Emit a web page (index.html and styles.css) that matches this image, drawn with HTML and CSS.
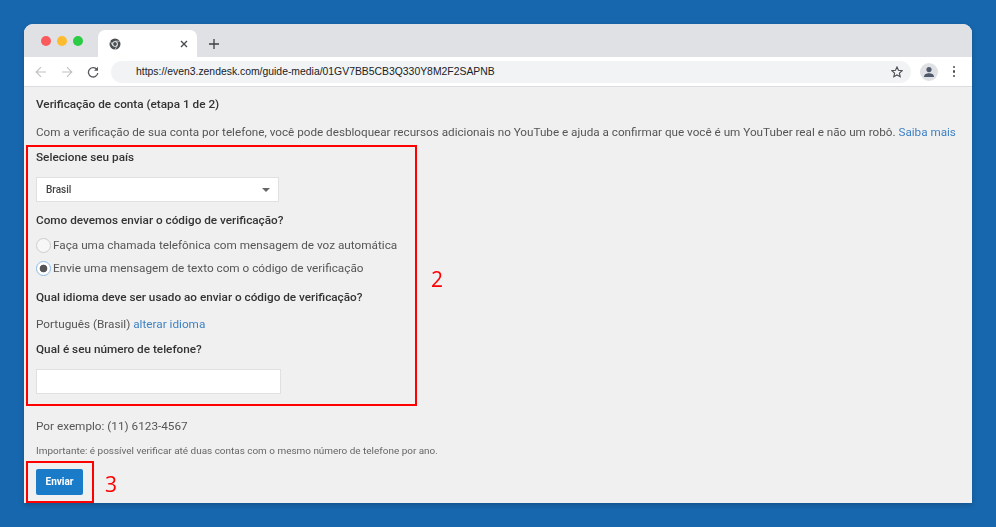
FILE: index.html
```html
<!DOCTYPE html>
<html lang="pt-BR">
<head>
<meta charset="utf-8">
<title>Verificação de conta</title>
<link rel="stylesheet" href="styles.css">
</head>
<body>
<div class="window">
  <div class="tabstrip">
    <div class="lights"><i class="light red"></i><i class="light yellow"></i><i class="light green"></i></div>
    <div class="tab">
      <svg class="favicon" viewBox="0 0 12 12" width="12" height="12"><circle cx="6" cy="6" r="5.5" fill="#4a4d52"/><circle cx="6" cy="6" r="2.8" fill="#fff"/><circle cx="6" cy="6" r="1.9" fill="#4a4d52"/><path d="M6 3.2h5M3.6 7.4 1.2 3.2M8.4 7.4 6 11.5" stroke="#fff" stroke-width=".6"/></svg>
      <svg class="close" viewBox="0 0 8 8" width="8" height="8"><path d="M1 1l6 6M7 1L1 7" stroke="#45484d" stroke-width="1.3"/></svg>
    </div>
    <svg class="newtab" viewBox="0 0 10 10" width="10" height="10"><path d="M5 0v10M0 5h10" stroke="#3c4043" stroke-width="1.3"/></svg>
  </div>
  <div class="toolbar">
    <svg class="nav" viewBox="0 0 12 12" width="12" height="12"><path d="M11 6H1.5M6 1.2 1.2 6 6 10.8" fill="none" stroke="#bfc1c5" stroke-width="1.1"/></svg>
    <svg class="nav" viewBox="0 0 12 12" width="12" height="12"><path d="M1 6h9.5M6 1.2 10.8 6 6 10.8" fill="none" stroke="#bfc1c5" stroke-width="1.1"/></svg>
    <svg class="nav" viewBox="0 0 12 12" width="12" height="12"><path d="M10 3.6A4.7 4.7 0 1 0 10.8 7" fill="none" stroke="#56595e" stroke-width="1.3"/><path d="M11 .8v4H7z" fill="#56595e"/></svg>
    <div class="omnibox">
      <span class="url">https://even3.zendesk.com/guide-media/01GV7BB5CB3Q330Y8M2F2SAPNB</span>
      <svg class="star" viewBox="0 0 12 12" width="12" height="12"><path d="M6 1l1.5 3.3 3.6.4-2.7 2.4.8 3.6L6 8.9l-3.2 1.8.8-3.6L.9 4.7l3.6-.4z" fill="none" stroke="#4a4d52" stroke-width="1.1"/></svg>
    </div>
    <div class="avatar"><svg viewBox="0 0 12 12" width="12" height="12"><circle cx="6" cy="3.6" r="2.6" fill="#4f5a6b"/><path d="M1 11c0-2.8 2.5-3.8 5-3.8s5 1 5 3.8z" fill="#4f5a6b"/></svg></div>
    <div class="menu"><i></i><i></i><i></i></div>
  </div>
  <main class="page">
    <h1 class="label heading">Verificação de conta (etapa 1 de 2)</h1>
    <p class="intro">Com a verificação de sua conta por telefone, você pode desbloquear recursos adicionais no YouTube e ajuda a confirmar que você é um YouTuber real e não um robô. <a class="link">Saiba mais</a></p>
    <h2 class="label country">Selecione seu país</h2>
    <div class="select"><span>Brasil</span><i class="caret"></i></div>
    <h2 class="label how">Como devemos enviar o código de verificação?</h2>
    <div class="radios">
      <div class="radio"><i class="dot"></i><span>Faça uma chamada telefônica com mensagem de voz automática</span></div>
      <div class="radio"><i class="dot on"></i><span>Envie uma mensagem de texto com o código de verificação</span></div>
    </div>
    <h2 class="label lang">Qual idioma deve ser usado ao enviar o código de verificação?</h2>
    <p class="langrow">Português (Brasil) <a class="link">alterar idioma</a></p>
    <h2 class="label phone">Qual é seu número de telefone?</h2>
    <div class="input"></div>
    <p class="example">Por exemplo: (11) 6123-4567</p>
    <p class="note">Importante: é possível verificar até duas contas com o mesmo número de telefone por ano.</p>
    <div class="submit">Enviar</div>
  </main>
  <div class="mark box2"></div>
  <div class="mark box3"></div>
  <span class="num num2">2</span>
  <span class="num num3">3</span>
</div>
</body>
</html>
```
FILE: styles.css
```css
* { box-sizing: border-box; }
html, body { margin: 0; height: 100%; }
body {
  background: #1767ae;
  padding: 24px;
  overflow: hidden;
  font-family: Roboto, "Liberation Sans", sans-serif;
}
.window {
  position: relative;
  width: 948px;
  height: 479px;
  background: #f0f0f0;
  border-radius: 9px 9px 0 0;
  box-shadow: 0 2px 5px rgba(0,0,0,.2);
  overflow: hidden;
  filter: blur(.35px);
}
.tabstrip {
  height: 33px;
  background: #dfe1e5;
  display: flex;
  align-items: flex-end;
}
.lights { display: flex; gap: 6px; padding: 0 0 11px 17px; width: 74px; }
.light { width: 10px; height: 10px; border-radius: 50%; }
.red { background: #fb5a5c; }
.yellow { background: #fdbb2f; }
.green { background: #2ccb45; }
.tab {
  width: 99px;
  height: 27px;
  background: #fff;
  border-radius: 7px 7px 0 0;
  display: flex;
  align-items: center;
  justify-content: space-between;
  padding: 0 9px 0 11px;
}
.newtab { margin: 0 0 8px 12px; }
.toolbar {
  height: 30px;
  background: #fff;
  border-bottom: 1px solid #dadce0;
  display: flex;
  align-items: center;
  padding-left: 11px;
}
.nav { margin-right: 14px; }
.omnibox {
  width: 800px;
  height: 22px;
  margin-left: -2px;
  border-radius: 11px;
  background: #f1f3f4;
  display: flex;
  align-items: center;
  justify-content: space-between;
  padding: 0 8px 0 25px;
}
.url { font: 10.4px "Liberation Sans", Arial, sans-serif; color: #202124; }
.avatar {
  width: 18px;
  height: 18px;
  margin-left: 9px;
  border-radius: 50%;
  background: #dfe1e5;
  display: flex;
  align-items: center;
  justify-content: center;
}
.menu { display: flex; flex-direction: column; gap: 2px; margin-left: 15px; }
.menu i { width: 2.4px; height: 2.4px; border-radius: 50%; background: #4a4d52; }
.page {
  padding: 9px 12px 0;
  font-size: 11.75px;
  line-height: 16px;
  color: #555;
}
.label { margin: 0; font-size: 11.75px; line-height: 16px; font-weight: 500; color: #333; }
.intro { margin: 12px 0 0; white-space: nowrap; font-size: 11.7px; }
.link { color: #3f82c4; }
.country { margin-top: 9px; }
.select {
  width: 243px;
  height: 25px;
  margin-top: 12px;
  background: #fff;
  border: 1px solid #e0e0e0;
  display: flex;
  align-items: center;
  justify-content: space-between;
  padding: 0 8px 0 9px;
  font-size: 10px;
  font-weight: 500;
  color: #444;
}
.caret { border: 4px solid transparent; border-top-color: #666; border-bottom: 0; }
.how { margin-top: 10px; }
.radios { margin-top: 9px; display: flex; flex-direction: column; gap: 7px; }
.radio { display: flex; align-items: center; gap: 2px; }
.dot {
  width: 15px;
  height: 15px;
  border-radius: 50%;
  border: 1px solid #ccc;
  background: #f7f7f7;
}
.dot.on {
  border: 1px solid #8ab8e8;
  background: radial-gradient(circle, #555 0 3.5px, #fff 4.2px);
}
.lang { margin-top: 13px; }
.langrow { margin: 11px 0 0; }
.phone { margin-top: 9px; }
.input {
  width: 245px;
  height: 25px;
  margin-top: 12px;
  background: #fff;
  border: 1px solid #e0e0e0;
}
.example { margin: 24px 0 0; }
.note { margin: 9px 0 0; font-size: 9.95px; color: #666; }
.submit {
  width: 47px;
  height: 26px;
  margin-top: 10px;
  background: #1a7bc9;
  border-radius: 2px;
  color: #fff;
  font-size: 10px;
  font-weight: 700;
  text-align: center;
  line-height: 26px;
}
.mark { position: absolute; border: 2px solid #f00; }
.box2 { left: 2px; top: 121px; width: 391px; height: 261px; }
.box3 { left: 2px; top: 437px; width: 68px; height: 42px; }
.num { position: absolute; font-family: "Open Sans", sans-serif; color: #f00; font-size: 21px; line-height: 24px; }
.num2 { left: 407px; top: 243px; }
.num3 { left: 81px; top: 448px; }
```
